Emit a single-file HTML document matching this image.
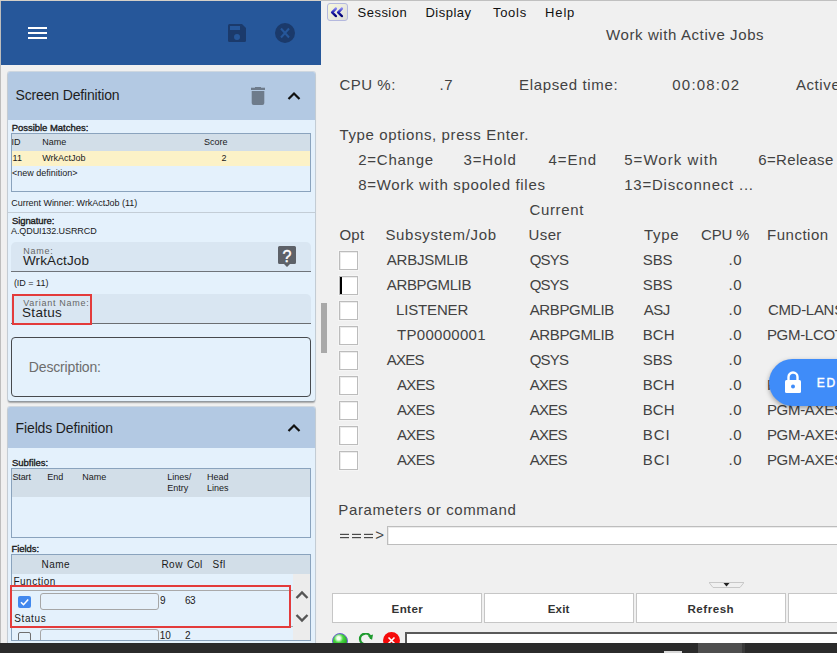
<!DOCTYPE html>
<html><head><meta charset="utf-8">
<style>
*{box-sizing:border-box;margin:0;padding:0}
html,body{width:837px;height:653px;overflow:hidden;background:#f0f0f0;font-family:"Liberation Sans",sans-serif;position:relative}
.a{position:absolute}
.t{position:absolute;white-space:nowrap;line-height:1;font-family:"Liberation Sans",sans-serif}
.bar{position:absolute;left:27px;width:19px;height:2px;background:#fff}
.panel{position:absolute;left:8px;width:307px;background:#e4f1fc;border-radius:2px;box-shadow:0 1.5px 1.5px rgba(0,0,0,.3), 0 0 0 1px rgba(150,175,200,.35)}
.ph{position:absolute;left:0;top:0;width:307px;background:#b3c9e3;border-radius:2px 2px 0 0}
.tbl{position:absolute;border:1px solid #8aa3bd}
.box{position:absolute;left:339px;width:19px;height:19px;background:#fff;border:1px solid #bcbcbc;box-shadow:inset 1px 1px 0 #ececec,0 0 0 1px #f5f5f5}
.btn{position:absolute;top:593px;height:30px;background:#fff;border:1px solid #c6c6c6}
</style></head><body>
<!-- top/left frame -->
<div class="a" style="left:0;top:0;width:837px;height:1px;background:#c0c0c0"></div>
<div class="a" style="left:0;top:0;width:321px;height:1px;background:#d4cfc7"></div>
<div class="a" style="left:0;top:1px;width:1px;height:652px;background:#bdbdbd"></div>

<!-- blue header -->
<div class="a" style="left:1px;top:1px;width:320px;height:64px;background:#26579a">
  <div class="bar" style="top:26px"></div>
  <div class="bar" style="top:31px"></div>
  <div class="bar" style="top:36px"></div>
</div>
<svg class="a" style="left:228px;top:24px" width="18" height="18" viewBox="0 0 18 18"><path d="M0 1.5Q0 0 1.5 0H14L18 4V16.5Q18 18 16.5 18H1.5Q0 18 0 16.5Z" fill="#1b3a6b"/><rect x="2" y="2" width="10" height="4" fill="#26579a"/><circle cx="9" cy="13" r="3" fill="#26579a"/></svg>
<svg class="a" style="left:275px;top:23px" width="20" height="20" viewBox="0 0 20 20"><circle cx="10" cy="10" r="10" fill="#1b3a6b"/><path d="M6 5.5L14 14.5M14 5.5L6 14.5" stroke="#26579a" stroke-width="2"/></svg>

<!-- Screen Definition panel -->
<div class="panel" style="top:72px;height:329px">
  <div class="ph" style="height:48px"></div>
</div>
<svg class="a" style="left:250px;top:86px" width="16" height="20" viewBox="0 0 16 20"><rect x="1" y="1.7" width="14" height="2.3" fill="#6e7b8b"/><rect x="5" y="1" width="6" height="2" fill="#6e7b8b"/><path d="M1.7 5H14.3V17Q14.3 19 12.3 19H3.7Q1.7 19 1.7 17Z" fill="#6e7b8b"/></svg>
<svg class="a" style="left:287px;top:91px" width="14" height="10" viewBox="0 0 14 10"><path d="M1.5 8L7 2.5L12.5 8" stroke="#111" stroke-width="2.2" fill="none"/></svg>
<!-- possible matches table -->
<div class="tbl" style="left:11px;top:133px;width:300px;height:59px;background:#e4f1fc"></div>
<div class="a" style="left:12px;top:134px;width:298px;height:17px;background:#d2dee8"></div>
<div class="a" style="left:12px;top:151px;width:298px;height:15px;background:#fcf2c7"></div>
<div class="a" style="left:8px;top:212px;width:307px;height:1px;background:#c3cdd6"></div>
<!-- Name field -->
<div class="a" style="left:11px;top:242px;width:300px;height:30px;background:#d9e6f2;border-radius:5px 5px 0 0;border-bottom:1px solid #6f747a"></div>
<svg class="a" style="left:278px;top:246px" width="19" height="22" viewBox="0 0 19 22"><path d="M0 1.5Q0 0 1.5 0H16.5Q18 0 18 1.5V16.5Q18 18 16.5 18H12L9 21L6 18H1.5Q0 18 0 16.5Z" fill="#5d6168"/><text x="9" y="15.5" font-family="Liberation Sans" font-size="16" fill="#fff" stroke="#fff" stroke-width="0.4" text-anchor="middle">?</text></svg>
<!-- Variant name field -->
<div class="a" style="left:11px;top:294px;width:300px;height:30px;background:#d9e6f2;border-radius:5px 5px 0 0;border-bottom:1px solid #6b6e72"></div>
<div class="a" style="left:12px;top:294px;width:80px;height:31px;border:2px solid #e33b3b"></div>
<!-- Description -->
<div class="a" style="left:11px;top:337px;width:300px;height:60px;border:1px solid #474a4e;border-radius:4px"></div>

<!-- Fields Definition panel -->
<div class="panel" style="top:407px;height:260px">
  <div class="ph" style="height:41px"></div>
</div>
<svg class="a" style="left:287px;top:423px" width="14" height="10" viewBox="0 0 14 10"><path d="M1.5 8L7 2.5L12.5 8" stroke="#111" stroke-width="2.2" fill="none"/></svg>
<div class="tbl" style="left:11px;top:468px;width:300px;height:70px"></div>
<div class="a" style="left:12px;top:469px;width:298px;height:28px;background:#d2dee8"></div>
<div class="tbl" style="left:11px;top:554px;width:300px;height:87px"></div>
<div class="a" style="left:12px;top:555px;width:298px;height:19px;background:#d2dee8"></div>
<div class="a" style="left:293px;top:574px;width:17px;height:66px;background:#ececec"></div>
<svg class="a" style="left:294px;top:589px" width="16" height="36" viewBox="0 0 16 36"><path d="M2.5 9L8 3.5L13.5 9M2.5 26L8 31.5L13.5 26" stroke="#555" stroke-width="2.4" fill="none"/></svg>
<div class="a" style="left:12px;top:590px;width:281px;height:1px;background:#a9a9a9"></div>
<div class="a" style="left:12px;top:626px;width:281px;height:1px;background:#a9a9a9"></div>
<div class="a" style="left:18px;top:596px;width:13px;height:12px;background:#4188ee;border-radius:2px"></div>
<svg class="a" style="left:18px;top:596px" width="13" height="12" viewBox="0 0 13 12"><path d="M3 6.2L5.5 8.7L10.2 3.5" stroke="#fff" stroke-width="1.6" fill="none"/></svg>
<div class="a" style="left:40px;top:593px;width:119px;height:17px;border:1px solid #a6a6a6;border-radius:3px;background:#e6f1fb"></div>
<div class="a" style="left:18px;top:632px;width:13px;height:12px;border:1px solid #6f6f6f;border-radius:2px"></div>
<div class="a" style="left:40px;top:629px;width:119px;height:17px;border:1px solid #a6a6a6;border-radius:3px"></div>
<div class="a" style="left:10px;top:585px;width:281px;height:43px;border:2px solid #e33b3b"></div>

<!-- Emulator -->
<div class="a" style="left:327px;top:3px;width:21px;height:18px;border:1px solid #b4b8de;border-radius:3px;background:linear-gradient(135deg,#f8f8da,#e8e8e0 60%,#dcdcd8)"></div>
<svg class="a" style="left:330px;top:7px" width="15" height="11" viewBox="0 0 15 11"><defs><linearGradient id="cg" x1="0" y1="0" x2="0" y2="1"><stop offset="0" stop-color="#8080f0"/><stop offset="0.5" stop-color="#2020b0"/><stop offset="1" stop-color="#000070"/></linearGradient></defs><path d="M5.8 1.6L2.2 5.3L5.8 9M11.8 1.6L8.2 5.3L11.8 9" stroke="url(#cg)" stroke-width="2.5" fill="none" stroke-linecap="round" stroke-linejoin="round"/></svg>
<div class="a" style="left:321px;top:303px;width:6px;height:50px;background:#a9a9a9"></div>
<div class="box" style="top:251px"></div>
<div class="box" style="top:276px"></div>
<div class="box" style="top:301px"></div>
<div class="box" style="top:326px"></div>
<div class="box" style="top:351px"></div>
<div class="box" style="top:376px"></div>
<div class="box" style="top:401px"></div>
<div class="box" style="top:426px"></div>
<div class="box" style="top:451px"></div>

<div class="a" style="left:340px;top:277px;width:2px;height:17px;background:#000"></div>
<svg class="a" style="left:339px;top:532px" width="36" height="8" viewBox="0 0 36 8"><g fill="#4a4a4a"><rect x="1" y="1.8" width="9" height="1.2"/><rect x="1" y="5" width="9" height="1.2"/><rect x="13" y="1.8" width="9" height="1.2"/><rect x="13" y="5" width="9" height="1.2"/><rect x="25" y="1.8" width="9" height="1.2"/><rect x="25" y="5" width="9" height="1.2"/></g></svg>
<div class="a" style="left:387px;top:526px;width:460px;height:19px;background:#fff;border:1px solid #bdbdbd;box-shadow:inset 1px 1px 0 #ececec"></div>
<svg class="a" style="left:709px;top:582px" width="35" height="6" viewBox="0 0 35 6"><path d="M0 0.5H35L31 5.5H4Z" fill="#f0f0f0" stroke="#c8c8c8" stroke-width="1"/><path d="M14.5 1H20.5L17.5 4.5Z" fill="#222"/></svg>
<div class="btn" style="left:332px;width:150px"></div>
<div class="btn" style="left:484px;width:150px"></div>
<div class="btn" style="left:636px;width:150px"></div>
<div class="btn" style="left:788px;width:150px"></div>
<!-- status bar -->
<div class="a" style="left:405px;top:632px;width:450px;height:20px;background:#fff;border:2px solid #5a5a5a"></div>
<div class="a" style="left:332px;top:633px;width:16px;height:16px;border-radius:50%;border:1px solid #6a5fd0;background:radial-gradient(circle at 40% 30%,#f4fff0 0,#f4fff0 12%,#45d63f 35%,#1c9a1c 80%)"></div>
<svg class="a" style="left:358px;top:633px" width="16" height="12" viewBox="0 0 16 12"><path d="M13 6A5.5 5.5 0 1 0 8 11.5" stroke="#1e9a2e" stroke-width="2.2" fill="none"/><path d="M10 3L15 1.5L14 7Z" fill="#1e9a2e"/></svg>
<div class="a" style="left:383px;top:632px;width:17px;height:17px;border-radius:50%;background:#f50a0a"></div>
<svg class="a" style="left:383px;top:632px" width="17" height="12" viewBox="0 0 17 12"><path d="M5.5 5.5L11.5 11.5M11.5 5.5L5.5 11.5" stroke="#fff" stroke-width="1.6"/></svg>

<div class="t" style="left:357.60px;top:6.00px;font-size:13px;color:#111;font-weight:normal;letter-spacing:0.467px;">Session</div>
<div class="t" style="left:425.40px;top:6.00px;font-size:13px;color:#111;font-weight:normal;letter-spacing:0.500px;">Display</div>
<div class="t" style="left:492.90px;top:6.00px;font-size:13px;color:#111;font-weight:normal;letter-spacing:0.750px;">Tools</div>
<div class="t" style="left:545.10px;top:6.00px;font-size:13px;color:#111;font-weight:normal;letter-spacing:0.833px;">Help</div>
<div class="t" style="left:606.00px;top:27.00px;font-size:15px;color:#424242;font-weight:normal;letter-spacing:0.600px;">Work with Active Jobs</div>
<div class="t" style="left:339.50px;top:76.70px;font-size:15px;color:#424242;font-weight:normal;letter-spacing:0.500px;">CPU %:</div>
<div class="t" style="left:439.40px;top:76.70px;font-size:15px;color:#424242;font-weight:normal;letter-spacing:0.8px">.7</div>
<div class="t" style="left:519.10px;top:76.70px;font-size:15px;color:#424242;font-weight:normal;letter-spacing:0.633px;">Elapsed time:</div>
<div class="t" style="left:672.30px;top:76.70px;font-size:15px;color:#424242;font-weight:normal;letter-spacing:1.200px;">00:08:02</div>
<div class="t" style="left:795.90px;top:76.70px;font-size:15px;color:#424242;font-weight:normal;letter-spacing:0.6px;">Active</div>
<div class="t" style="left:339.50px;top:126.70px;font-size:15px;color:#424242;font-weight:normal;letter-spacing:0.620px;">Type options, press Enter.</div>
<div class="t" style="left:358.30px;top:151.70px;font-size:15px;color:#424242;font-weight:normal;letter-spacing:0.729px;">2=Change</div>
<div class="t" style="left:463.50px;top:151.70px;font-size:15px;color:#424242;font-weight:normal;letter-spacing:0.880px;">3=Hold</div>
<div class="t" style="left:548.40px;top:151.70px;font-size:15px;color:#424242;font-weight:normal;letter-spacing:0.975px;">4=End</div>
<div class="t" style="left:624.20px;top:151.70px;font-size:15px;color:#424242;font-weight:normal;letter-spacing:1.050px;">5=Work with</div>
<div class="t" style="left:758.20px;top:151.70px;font-size:15px;color:#424242;font-weight:normal;letter-spacing:0.363px;">6=Release</div>
<div class="t" style="left:358.30px;top:176.70px;font-size:15px;color:#424242;font-weight:normal;letter-spacing:0.683px;">8=Work with spooled files</div>
<div class="t" style="left:624.20px;top:176.70px;font-size:15px;color:#424242;font-weight:normal;letter-spacing:0.781px;">13=Disconnect ...</div>
<div class="t" style="left:529.50px;top:201.70px;font-size:15px;color:#424242;font-weight:normal;letter-spacing:0.633px;">Current</div>
<div class="t" style="left:339.50px;top:226.70px;font-size:15px;color:#424242;font-weight:normal;letter-spacing:0.200px;">Opt</div>
<div class="t" style="left:385.40px;top:226.70px;font-size:15px;color:#424242;font-weight:normal;letter-spacing:0.683px;">Subsystem/Job</div>
<div class="t" style="left:528.50px;top:226.70px;font-size:15px;color:#424242;font-weight:normal;letter-spacing:0.400px;">User</div>
<div class="t" style="left:643.90px;top:226.70px;font-size:15px;color:#424242;font-weight:normal;letter-spacing:0.700px;">Type</div>
<div class="t" style="left:701.00px;top:226.70px;font-size:15px;color:#424242;font-weight:normal;letter-spacing:-0.200px;">CPU %</div>
<div class="t" style="left:767.10px;top:226.70px;font-size:15px;color:#424242;font-weight:normal;letter-spacing:0.500px;">Function</div>
<div class="t" style="left:386.80px;top:251.70px;font-size:15px;color:#424242;font-weight:normal;letter-spacing:-0.238px;">ARBJSMLIB</div>
<div class="t" style="left:529.70px;top:251.70px;font-size:15px;color:#424242;font-weight:normal;letter-spacing:-0.800px;">QSYS</div>
<div class="t" style="left:642.70px;top:251.70px;font-size:15px;color:#424242;font-weight:normal;letter-spacing:-0.050px;">SBS</div>
<div class="t" style="left:728.40px;top:251.70px;font-size:15px;color:#424242;font-weight:normal;letter-spacing:0.8px">.0</div>
<div class="t" style="left:386.80px;top:276.70px;font-size:15px;color:#424242;font-weight:normal;letter-spacing:-0.363px;">ARBPGMLIB</div>
<div class="t" style="left:529.70px;top:276.70px;font-size:15px;color:#424242;font-weight:normal;letter-spacing:-0.800px;">QSYS</div>
<div class="t" style="left:642.70px;top:276.70px;font-size:15px;color:#424242;font-weight:normal;letter-spacing:-0.050px;">SBS</div>
<div class="t" style="left:728.40px;top:276.70px;font-size:15px;color:#424242;font-weight:normal;letter-spacing:0.8px">.0</div>
<div class="t" style="left:396.10px;top:301.70px;font-size:15px;color:#424242;font-weight:normal;letter-spacing:-0.171px;">LISTENER</div>
<div class="t" style="left:529.70px;top:301.70px;font-size:15px;color:#424242;font-weight:normal;letter-spacing:-0.363px;">ARBPGMLIB</div>
<div class="t" style="left:643.70px;top:301.70px;font-size:15px;color:#424242;font-weight:normal;letter-spacing:-0.500px;">ASJ</div>
<div class="t" style="left:728.40px;top:301.70px;font-size:15px;color:#424242;font-weight:normal;letter-spacing:0.8px">.0</div>
<div class="t" style="left:767.90px;top:301.70px;font-size:15px;color:#424242;font-weight:normal;letter-spacing:-0.3px">CMD-LANSA</div>
<div class="t" style="left:397.10px;top:326.70px;font-size:15px;color:#424242;font-weight:normal;letter-spacing:0.278px;">TP00000001</div>
<div class="t" style="left:529.70px;top:326.70px;font-size:15px;color:#424242;font-weight:normal;letter-spacing:-0.363px;">ARBPGMLIB</div>
<div class="t" style="left:642.70px;top:326.70px;font-size:15px;color:#424242;font-weight:normal;letter-spacing:0.100px;">BCH</div>
<div class="t" style="left:728.40px;top:326.70px;font-size:15px;color:#424242;font-weight:normal;letter-spacing:0.8px">.0</div>
<div class="t" style="left:766.90px;top:326.70px;font-size:15px;color:#424242;font-weight:normal;letter-spacing:-0.3px">PGM-LCOTP</div>
<div class="t" style="left:386.80px;top:351.70px;font-size:15px;color:#424242;font-weight:normal;letter-spacing:-0.733px;">AXES</div>
<div class="t" style="left:529.70px;top:351.70px;font-size:15px;color:#424242;font-weight:normal;letter-spacing:-0.800px;">QSYS</div>
<div class="t" style="left:642.70px;top:351.70px;font-size:15px;color:#424242;font-weight:normal;letter-spacing:-0.050px;">SBS</div>
<div class="t" style="left:728.40px;top:351.70px;font-size:15px;color:#424242;font-weight:normal;letter-spacing:0.8px">.0</div>
<div class="t" style="left:397.10px;top:376.70px;font-size:15px;color:#424242;font-weight:normal;letter-spacing:-0.733px;">AXES</div>
<div class="t" style="left:529.70px;top:376.70px;font-size:15px;color:#424242;font-weight:normal;letter-spacing:-0.733px;">AXES</div>
<div class="t" style="left:642.70px;top:376.70px;font-size:15px;color:#424242;font-weight:normal;letter-spacing:0.100px;">BCH</div>
<div class="t" style="left:728.40px;top:376.70px;font-size:15px;color:#424242;font-weight:normal;letter-spacing:0.8px">.0</div>
<div class="t" style="left:766.90px;top:376.70px;font-size:15px;color:#424242;font-weight:normal;letter-spacing:-0.3px">PGM-AXES</div>
<div class="t" style="left:397.10px;top:401.70px;font-size:15px;color:#424242;font-weight:normal;letter-spacing:-0.733px;">AXES</div>
<div class="t" style="left:529.70px;top:401.70px;font-size:15px;color:#424242;font-weight:normal;letter-spacing:-0.733px;">AXES</div>
<div class="t" style="left:642.70px;top:401.70px;font-size:15px;color:#424242;font-weight:normal;letter-spacing:0.100px;">BCH</div>
<div class="t" style="left:728.40px;top:401.70px;font-size:15px;color:#424242;font-weight:normal;letter-spacing:0.8px">.0</div>
<div class="t" style="left:766.90px;top:401.70px;font-size:15px;color:#424242;font-weight:normal;letter-spacing:-0.3px">PGM-AXES</div>
<div class="t" style="left:397.10px;top:426.70px;font-size:15px;color:#424242;font-weight:normal;letter-spacing:-0.733px;">AXES</div>
<div class="t" style="left:529.70px;top:426.70px;font-size:15px;color:#424242;font-weight:normal;letter-spacing:-0.733px;">AXES</div>
<div class="t" style="left:642.70px;top:426.70px;font-size:15px;color:#424242;font-weight:normal;letter-spacing:1.000px;">BCI</div>
<div class="t" style="left:728.40px;top:426.70px;font-size:15px;color:#424242;font-weight:normal;letter-spacing:0.8px">.0</div>
<div class="t" style="left:766.90px;top:426.70px;font-size:15px;color:#424242;font-weight:normal;letter-spacing:-0.3px">PGM-AXES</div>
<div class="t" style="left:397.10px;top:451.70px;font-size:15px;color:#424242;font-weight:normal;letter-spacing:-0.733px;">AXES</div>
<div class="t" style="left:529.70px;top:451.70px;font-size:15px;color:#424242;font-weight:normal;letter-spacing:-0.733px;">AXES</div>
<div class="t" style="left:642.70px;top:451.70px;font-size:15px;color:#424242;font-weight:normal;letter-spacing:1.000px;">BCI</div>
<div class="t" style="left:728.40px;top:451.70px;font-size:15px;color:#424242;font-weight:normal;letter-spacing:0.8px">.0</div>
<div class="t" style="left:766.90px;top:451.70px;font-size:15px;color:#424242;font-weight:normal;letter-spacing:-0.3px">PGM-AXES</div>
<div class="t" style="left:338.30px;top:501.70px;font-size:15px;color:#424242;font-weight:normal;letter-spacing:0.620px;">Parameters or command</div>
<div class="t" style="left:375.30px;top:526.70px;font-size:15px;color:#424242;font-weight:normal;">&gt;</div>
<div class="t" style="left:391.50px;top:602.70px;font-size:11.6px;color:#333;font-weight:bold;letter-spacing:0.400px;">Enter</div>
<div class="t" style="left:547.70px;top:602.70px;font-size:11.6px;color:#333;font-weight:bold;letter-spacing:0.167px;">Exit</div>
<div class="t" style="left:687.50px;top:602.70px;font-size:11.6px;color:#333;font-weight:bold;letter-spacing:0.500px;">Refresh</div>
<div class="t" style="left:816.70px;top:376.80px;font-size:12px;color:#fff;font-weight:normal;letter-spacing:1.9px;-webkit-text-stroke:0.4px #fff;z-index:5">EDIT</div>
<div class="t" style="left:15.60px;top:87.60px;font-size:14px;color:#1e1e1e;font-weight:normal;letter-spacing:-0.162px;">Screen Definition</div>
<div class="t" style="left:11.70px;top:122.70px;font-size:9.5px;color:#1a1a1a;font-weight:normal;letter-spacing:-0.031px;-webkit-text-stroke:0.35px #1a1a1a">Possible Matches:</div>
<div class="t" style="left:11.60px;top:138.00px;font-size:9px;color:#1a1a1a;font-weight:normal;">ID</div>
<div class="t" style="left:42.30px;top:138.00px;font-size:9px;color:#1a1a1a;font-weight:normal;">Name</div>
<div class="t" style="left:204.00px;top:138.00px;font-size:9px;color:#1a1a1a;font-weight:normal;letter-spacing:0.000px;">Score</div>
<div class="t" style="left:12.60px;top:154.20px;font-size:9px;color:#1a1a1a;font-weight:normal;">11</div>
<div class="t" style="left:42.20px;top:154.20px;font-size:9px;color:#1a1a1a;font-weight:normal;">WrkActJob</div>
<div class="t" style="left:221.60px;top:154.20px;font-size:9px;color:#1a1a1a;font-weight:normal;">2</div>
<div class="t" style="left:12.00px;top:169.00px;font-size:9px;color:#1a1a1a;font-weight:normal;">&lt;new definition&gt;</div>
<div class="t" style="left:11.30px;top:198.80px;font-size:9px;color:#1a1a1a;font-weight:normal;letter-spacing:-0.045px;">Current Winner: WrkActJob (11)</div>
<div class="t" style="left:12.00px;top:216.10px;font-size:9.5px;color:#1a1a1a;font-weight:normal;letter-spacing:-0.111px;-webkit-text-stroke:0.35px #1a1a1a">Signature:</div>
<div class="t" style="left:11.00px;top:226.70px;font-size:9px;color:#1a1a1a;font-weight:normal;letter-spacing:-0.093px;">A.QDUI132.USRRCD</div>
<div class="t" style="left:23.30px;top:246.80px;font-size:9px;color:#666;font-weight:normal;letter-spacing:0.750px;">Name:</div>
<div class="t" style="left:23.00px;top:253.70px;font-size:13.5px;color:#1e1e1e;font-weight:normal;letter-spacing:0.125px;">WrkActJob</div>
<div class="t" style="left:13.90px;top:279.30px;font-size:9px;color:#1a1a1a;font-weight:normal;letter-spacing:-0.013px;">(ID = 11)</div>
<div class="t" style="left:23.30px;top:298.50px;font-size:9px;color:#666;font-weight:normal;letter-spacing:0.708px;">Variant Name:</div>
<div class="t" style="left:22.00px;top:305.60px;font-size:13.5px;color:#1e1e1e;font-weight:normal;letter-spacing:0.320px;">Status</div>
<div class="t" style="left:28.80px;top:360.00px;font-size:14px;color:#6d6d6d;font-weight:normal;letter-spacing:-0.155px;">Description:</div>
<div class="t" style="left:15.60px;top:420.60px;font-size:14px;color:#1e1e1e;font-weight:normal;letter-spacing:-0.138px;">Fields Definition</div>
<div class="t" style="left:12.00px;top:457.90px;font-size:9.5px;color:#1a1a1a;font-weight:normal;letter-spacing:-0.025px;-webkit-text-stroke:0.35px #1a1a1a">Subfiles:</div>
<div class="t" style="left:12.40px;top:472.80px;font-size:9px;color:#1a1a1a;font-weight:normal;letter-spacing:-0.125px;">Start</div>
<div class="t" style="left:47.20px;top:472.80px;font-size:9px;color:#1a1a1a;font-weight:normal;">End</div>
<div class="t" style="left:82.20px;top:472.80px;font-size:9px;color:#1a1a1a;font-weight:normal;">Name</div>
<div class="t" style="left:167.30px;top:472.80px;font-size:9px;color:#1a1a1a;font-weight:normal;">Lines/</div>
<div class="t" style="left:167.30px;top:483.70px;font-size:9px;color:#1a1a1a;font-weight:normal;">Entry</div>
<div class="t" style="left:206.90px;top:472.80px;font-size:9px;color:#1a1a1a;font-weight:normal;">Head</div>
<div class="t" style="left:206.90px;top:483.70px;font-size:9px;color:#1a1a1a;font-weight:normal;">Lines</div>
<div class="t" style="left:11.40px;top:543.50px;font-size:9.5px;color:#1a1a1a;font-weight:normal;letter-spacing:-0.033px;-webkit-text-stroke:0.35px #1a1a1a">Fields:</div>
<div class="t" style="left:41.40px;top:560.00px;font-size:10px;color:#1a1a1a;font-weight:normal;letter-spacing:0.533px;">Name</div>
<div class="t" style="left:161.40px;top:560.00px;font-size:10px;color:#1a1a1a;font-weight:normal;letter-spacing:0.500px;">Row</div>
<div class="t" style="left:187.00px;top:560.00px;font-size:10px;color:#1a1a1a;font-weight:normal;letter-spacing:0.050px;">Col</div>
<div class="t" style="left:212.50px;top:560.00px;font-size:10px;color:#1a1a1a;font-weight:normal;letter-spacing:0.500px;">Sfl</div>
<div class="t" style="left:13.40px;top:577.40px;font-size:10px;color:#1a1a1a;font-weight:normal;letter-spacing:0.514px;">Function</div>
<div class="t" style="left:160.00px;top:596.00px;font-size:10px;color:#1a1a1a;font-weight:normal;">9</div>
<div class="t" style="left:184.90px;top:596.00px;font-size:10px;color:#1a1a1a;font-weight:normal;letter-spacing:-0.400px;">63</div>
<div class="t" style="left:14.30px;top:613.80px;font-size:10px;color:#1a1a1a;font-weight:normal;letter-spacing:0.600px;">Status</div>
<div class="t" style="left:159.80px;top:631.40px;font-size:10px;color:#1a1a1a;font-weight:normal;letter-spacing:-0.100px;">10</div>
<div class="t" style="left:185.00px;top:631.40px;font-size:10px;color:#1a1a1a;font-weight:normal;">2</div>
<!-- EDIT floating button -->
<div class="a" style="left:769px;top:359px;width:100px;height:47px;border-radius:24px;background:#3f8cf9;box-shadow:0 2px 5px rgba(0,0,0,.35);z-index:4"></div>
<svg class="a" style="left:784px;top:371px;z-index:4" width="18" height="23" viewBox="0 0 18 23"><path d="M4.5 9V6A4.5 4.5 0 0 1 13.5 6V9" stroke="#fff" stroke-width="2.4" fill="none"/><rect x="1" y="9" width="16" height="13" rx="1.5" fill="#fff"/><circle cx="9" cy="15.5" r="2" fill="#3f8cf9"/></svg>



<div class="a" style="left:11px;top:640px;width:300px;height:1px;background:#8aa3bd"></div>
<div class="a" style="left:8px;top:641px;width:307px;height:2px;background:#e4f1fc"></div>
<!-- taskbar -->
<div class="a" style="left:0;top:643px;width:837px;height:10px;background:#2b2b2b"></div>
<div class="a" style="left:698px;top:643px;width:44px;height:10px;background:#4e4e4e"></div>
<div class="a" style="left:742px;top:643px;width:3px;height:10px;background:#3a3a3a"></div>
<div class="a" style="left:664px;top:651px;width:18px;height:2px;background:#d8d8d8"></div>
</body></html>
